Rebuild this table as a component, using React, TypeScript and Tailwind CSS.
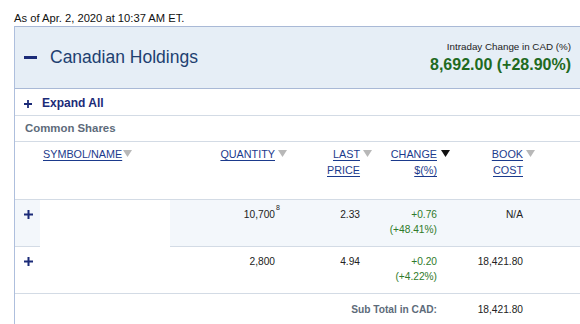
import React from "react";

const font = "font-['Liberation_Sans',Arial,sans-serif]";
const cols = "grid grid-cols-[25px_160px_87px_85px_77px_86px_1fr]";

const Arrow = ({ dark = false }: { dark?: boolean }) => (
  <svg width="9" height="7" viewBox="0 0 9 7" className="mt-[4px] shrink-0">
    <path d="M0 0H9L4.5 7Z" fill={dark ? "#111111" : "#b8b8b8"} />
  </svg>
);

const Plus = ({ size = 9 }: { size?: number }) => (
  <svg width={size} height={size} viewBox="0 0 9 9" className="shrink-0">
    <path d="M4.5 0V9M0 4.5H9" stroke="#1b2b78" strokeWidth="2" />
  </svg>
);

const Head = ({ lines, dark = false }: { lines: string[]; dark?: boolean }) => (
  <div className="flex justify-end pt-[4px]">
    <div className="flex flex-col items-end">
      {lines.map((l) => (
        <span key={l} className="leading-[16px] text-[#1b3a8c] underline underline-offset-[2px]">
          {l}
        </span>
      ))}
    </div>
    <div className={`w-[12px] flex ${dark ? "pl-[4px]" : "pl-[3px]"}`}>
      <Arrow dark={dark} />
    </div>
  </div>
);

const Cell = ({ children, green = false }: { children: React.ReactNode; green?: boolean }) => (
  <div className={`pt-[7px] pr-[12px] text-right leading-[15px] ${green ? "text-[#2f7a2a]" : "text-[#222]"}`}>
    {children}
  </div>
);

type Row = { qty: string; sup?: string; price: string; chg: string; pct: string; book: string; shade?: boolean };

const rows: Row[] = [
  { qty: "10,700", sup: "8", price: "2.33", chg: "+0.76", pct: "(+48.41%)", book: "N/A", shade: true },
  { qty: "2,800", price: "4.94", chg: "+0.20", pct: "(+4.22%)", book: "18,421.80" },
];

export default function App() {
  return (
    <div className={`w-[580px] h-[324px] overflow-hidden bg-white ${font}`}>
      <div className="pt-[11px] pl-[14px] text-[11.2px] leading-[14px] text-[#111]">
        As of Apr. 2, 2020 at 10:37 AM ET.
      </div>
      <div className="ml-[14px] mt-px w-[580px] border-l border-[#aebfdd]">
        <div className="flex h-[63px] items-stretch justify-between border-y border-[#a9b9d6] bg-[#e6eef6] pl-[9px] pr-[23px]">
          <div className="flex items-center gap-[13px]">
            <div className="h-[3px] w-[13px] bg-[#1b2b78]" />
            <span className="text-[17.5px] text-[#213f70]">Canadian Holdings</span>
          </div>
          <div className="flex flex-col items-end pt-[13px]">
            <span className="text-[9.8px] leading-[13px] text-[#222]">Intraday Change in CAD (%)</span>
            <span className="mt-[2px] text-[16px] font-bold leading-[20px] text-[#1f6a1f]">
              8,692.00 (+28.90%)
            </span>
          </div>
        </div>

        <div className="flex items-center gap-[10px] border-b border-[#d3dbe5] pl-[9px] pt-[7px] pb-[4px] leading-[15px]">
          <Plus size={8} />
          <span className="text-[12px] font-bold text-[#1b2b78]">Expand All</span>
        </div>

        <div className="border-b border-[#d3dbe5] pl-[10px] pt-[5px] pb-[5px] text-[11.4px] font-bold leading-[15px] text-[#5d6b7a]">
          Common Shares
        </div>

        <div className={`${cols} h-[58px] border-b border-[#d3dbe5] text-[10.8px]`}>
          <div />
          <div className="flex pt-[4px] pl-[3px]">
            <span className="leading-[16px] text-[#1b3a8c] underline underline-offset-[2px]">SYMBOL/NAME</span>
            <div className="pl-[1px]">
              <Arrow />
            </div>
          </div>
          <Head lines={["QUANTITY"]} />
          <Head lines={["LAST", "PRICE"]} />
          <Head lines={["CHANGE", "$(%)"]} dark />
          <Head lines={["BOOK", "COST"]} />
          <div />
        </div>

        {rows.map((r) => (
          <div
            key={r.qty}
            className={`${cols} h-[47px] border-b border-[#d3dbe5] text-[10.2px] ${r.shade ? "bg-[#f3f7fb]" : "bg-white"}`}
          >
            <div className="pl-[9px] pt-[10px]">
              <Plus />
            </div>
            {r.shade ? <div className="relative z-10 mb-[-1px] w-[130px] bg-white" /> : <div />}
            <Cell>
              <span className="relative">
                {r.qty}
                {r.sup && (
                  <span className="absolute left-full top-[-5px] pl-[1px] text-[7px] leading-[8px]">{r.sup}</span>
                )}
              </span>
            </Cell>
            <Cell>{r.price}</Cell>
            <Cell green>
              {r.chg}
              <br />
              {r.pct}
            </Cell>
            <Cell>{r.book}</Cell>
            <div />
          </div>
        ))}

        <div className={`${cols} h-[30px] text-[10.2px]`}>
          <div className="col-span-5 pt-[8px] pr-[12px] text-right font-bold leading-[15px] text-[#5d6b7a]">
            Sub Total in CAD:
          </div>
          <div className="pt-[8px] pr-[12px] text-right leading-[15px] text-[#222]">18,421.80</div>
          <div />
        </div>
      </div>
    </div>
  );
}
